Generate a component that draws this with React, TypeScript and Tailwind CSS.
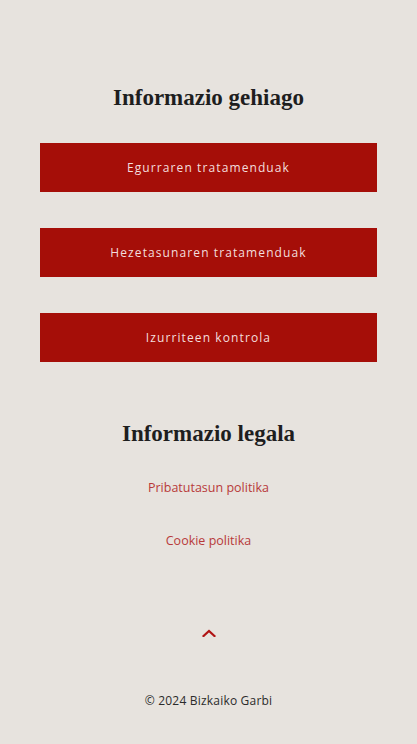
export default function App() {
  const buttons = [
    "Egurraren tratamenduak",
    "Hezetasunaren tratamenduak",
    "Izurriteen kontrola",
  ];
  const links = ["Pribatutasun politika", "Cookie politika"];

  return (
    <div
      className="min-h-[744px] w-full bg-[#e7e3de] flex flex-col items-center"
      style={{ fontFamily: '"Open Sans", "DejaVu Sans", sans-serif' }}
    >
      <h2 className="mt-[84px] text-[23px] leading-[28px] font-bold text-[#1e1e1e] font-['Liberation_Serif',serif]">
        Informazio gehiago
      </h2>

      <div className="mt-[31px] w-full px-10 flex flex-col gap-[36px]">
        {buttons.map((label) => (
          <a
            key={label}
            href="#"
            className="h-[49px] w-full bg-[#a50e08] flex items-center justify-center text-[12px] tracking-[1.1px] text-[#f3dede]"
          >
            {label}
          </a>
        ))}
      </div>

      <h2 className="mt-[58px] text-[23px] leading-[28px] font-bold text-[#1e1e1e] font-['Liberation_Serif',serif]">
        Informazio legala
      </h2>

      <div className="mt-[31px] flex flex-col items-center gap-[35px]">
        {links.map((label) => (
          <a
            key={label}
            href="#"
            className="text-[12.5px] leading-[18px] text-[#b83a3a]"
          >
            {label}
          </a>
        ))}
      </div>

      <button className="mt-[79px] text-[#b01414]">
        <svg width="14" height="8" viewBox="0 0 14 8" fill="none">
          <path
            d="M1.5 7L7 2L12.5 7"
            stroke="currentColor"
            strokeWidth="2.2"
            strokeLinecap="square"
          />
        </svg>
      </button>

      <p className="mt-[55px] text-[12px] leading-[18px] text-[#2b2b2b] font-medium tracking-[0.2px]">
        © 2024 Bizkaiko Garbi
      </p>
    </div>
  );
}
